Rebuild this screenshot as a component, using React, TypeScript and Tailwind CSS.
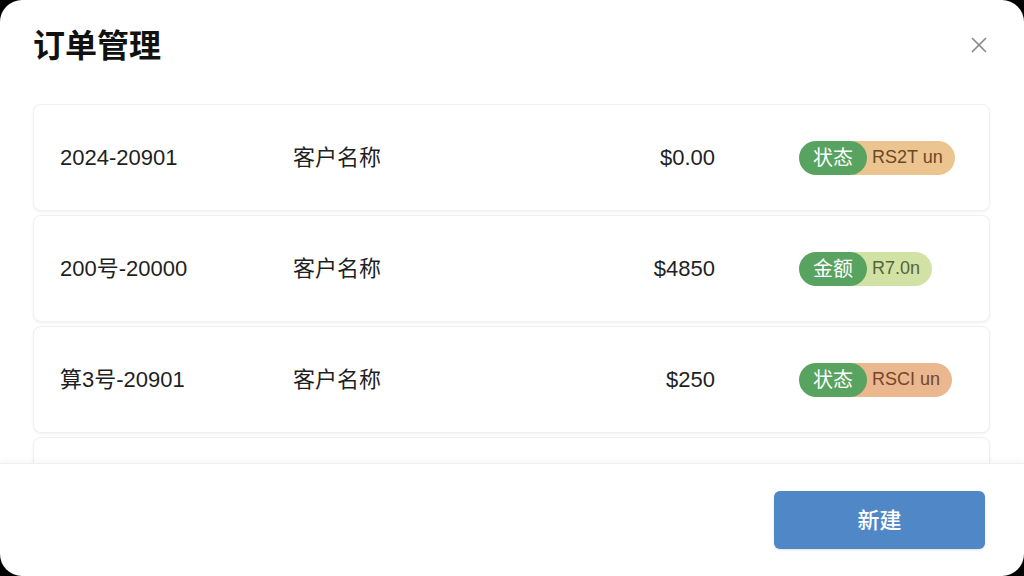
import { X } from 'lucide-react';

type Order = {
  id: string;
  name: string;
  amount: string;
  tag: string;
  note: string;
  noteClass: string;
};

const orders: Order[] = [
  { id: '2024-20901', name: '客户名称', amount: '$0.00', tag: '状态', note: 'RS2T un', noteClass: 'bg-[#ecc48f] text-[#6b4826]' },
  { id: '200号-20000', name: '客户名称', amount: '$4850', tag: '金额', note: 'R7.0n', noteClass: 'bg-[#d2e2a4] text-[#56643a]' },
  { id: '算3号-20901', name: '客户名称', amount: '$250', tag: '状态', note: 'RSCI un', noteClass: 'bg-[#ebb78f] text-[#74462a]' },
  { id: '2024-20901', name: '客户名称', amount: '$0.00', tag: '状态', note: 'RS2T un', noteClass: 'bg-[#ecc48f] text-[#6b4826]' },
];

function OrderRow({ order }: { order: Order }) {
  return (
    <div className="flex h-[107px] shrink-0 items-center rounded-lg border border-[#f0f0f0] bg-white px-[26px] text-[22px] text-[#1f1f1f] shadow-[0_1px_3px_rgba(0,0,0,0.06)]">
      <span className="w-[233px] shrink-0">{order.id}</span>
      <span className="flex-1">{order.name}</span>
      <span className="mr-[84px] text-right">{order.amount}</span>
      <div className="flex w-[164px] items-center">
        <span className="relative z-10 flex h-[34px] items-center rounded-full bg-[#58a360] px-[14px] text-[20px] text-white">
          {order.tag}
        </span>
        <span className={`-ml-[14px] flex h-[34px] items-center rounded-r-full pl-[19px] pr-[12px] text-[18px] ${order.noteClass}`}>
          {order.note}
        </span>
      </div>
    </div>
  );
}

export default function App() {
  return (
    <div className="h-[576px] w-[1024px] bg-black" style={{ fontFamily: '"Liberation Sans", "Noto Sans CJK SC", sans-serif' }}>
      <div className="flex h-full flex-col overflow-hidden rounded-[22px] bg-white">
        <div className="flex h-[104px] shrink-0 items-start justify-between pl-[33px] pr-[32px] pt-[27px]">
          <h1 className="text-[32px] font-bold leading-[38px] text-[#111]">订单管理</h1>
          <button className="mt-[5px] text-[#8a8a8a]">
            <X size={26} strokeWidth={1.6} />
          </button>
        </div>
        <div className="flex flex-1 flex-col gap-1 overflow-hidden pl-[33px] pr-[34px]">
          {orders.map((o, i) => (
            <OrderRow key={i} order={o} />
          ))}
        </div>
        <div className="flex h-[113px] shrink-0 items-center justify-end border-t border-[#efefef] pr-[39px] shadow-[0_-2px_6px_rgba(0,0,0,0.04)]">
          <button className="h-[58px] w-[211px] rounded-md bg-[#5088c7] text-[22px] font-medium text-white shadow-sm">新建</button>
        </div>
      </div>
    </div>
  );
}
